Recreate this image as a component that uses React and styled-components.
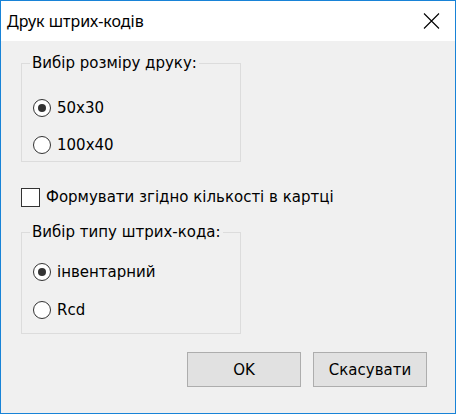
import React from 'react';
import styled, { createGlobalStyle } from 'styled-components';

const GlobalStyle = createGlobalStyle`
  html, body {
    margin: 0;
    padding: 0;
    background: #ffffff;
  }
`;

const Window = styled.div`
  width: 456px;
  height: 414px;
  box-sizing: border-box;
  border: 1px solid #1883d7;
  background: #f0f0f0;
  display: flex;
  flex-direction: column;
  font-family: 'DejaVu Sans', 'Liberation Sans', sans-serif;
  font-size: 15px;
  color: #000;
`;

const TitleBar = styled.div`
  height: 40px;
  flex: none;
  background: #ffffff;
  display: flex;
  align-items: center;
  padding: 0 15px 0 6px;
`;

const Title = styled.div`
  flex: 1;
  font-family: 'Noto Sans', 'Open Sans', sans-serif;
  font-size: 16px;
  color: #000;
`;

const CloseButton = styled.div`
  width: 18px;
  height: 18px;
  display: flex;
  align-items: center;
  justify-content: center;
`;

const Client = styled.div`
  flex: 1;
  padding: 13px 28px 0 20px;
  display: flex;
  flex-direction: column;
`;

const Group = styled.fieldset`
  width: 220px;
  box-sizing: border-box;
  margin: 0;
  padding: ${(p) => p.$pad};
  border: 1px solid #dcdcdc;
  display: flex;
  flex-direction: column;
  gap: ${(p) => p.$gap}px;
`;

const Legend = styled.legend`
  padding: 0 2px;
  line-height: 18px;
`;

const Option = styled.div`
  height: 20px;
  display: flex;
  align-items: center;
  gap: 6px;
  padding-left: 3px;
`;

const Radio = styled.span`
  width: 18px;
  height: 18px;
  box-sizing: border-box;
  border: 1.5px solid #333;
  border-radius: 50%;
  background: #fff;
  display: flex;
  align-items: center;
  justify-content: center;

  &::after {
    content: '';
    width: 8px;
    height: 8px;
    border-radius: 50%;
    background: ${(p) => (p.$checked ? '#333' : 'transparent')};
  }
`;

const CheckRow = styled.div`
  margin-top: 25px;
  height: 20px;
  display: flex;
  align-items: center;
  gap: 6px;
`;

const Checkbox = styled.span`
  width: 19px;
  height: 19px;
  box-sizing: border-box;
  border: 1.5px solid #333;
  background: #fff;
`;

const Spacer = styled.div`
  height: ${(p) => p.$h}px;
  flex: none;
`;

const Buttons = styled.div`
  margin-top: 18px;
  display: flex;
  justify-content: flex-end;
  gap: 12px;
`;

const Button = styled.button`
  width: 114px;
  height: 35px;
  box-sizing: border-box;
  border: 1px solid #adadad;
  background: #e1e1e1;
  font-family: 'DejaVu Sans', 'Liberation Sans', sans-serif;
  font-size: 15px;
  color: #000;
  padding: 0;
`;

const sizes = [
  { id: '50x30', checked: true },
  { id: '100x40', checked: false },
];

const types = [
  { id: 'інвентарний', checked: true },
  { id: 'Rcd', checked: false },
];

export default function App() {
  return (
    <>
      <GlobalStyle />
      <Window>
        <TitleBar>
          <Title>Друк штрих-кодів</Title>
          <CloseButton>
            <svg width="17" height="16" viewBox="0 0 17 16">
              <path d="M1 0.5 L16 15.5 M16 0.5 L1 15.5" stroke="#000" strokeWidth="1.1" />
            </svg>
          </CloseButton>
        </TitleBar>
        <Client>
          <Group $pad="26px 0 6px 8px" $gap={17}>
            <Legend>Вибір розміру друку:</Legend>
            {sizes.map(({ id, checked }) => (
              <Option key={id}>
                <Radio $checked={checked} />
                {id}
              </Option>
            ))}
          </Group>
          <CheckRow>
            <Checkbox />
            Формувати згідно кількості в картці
          </CheckRow>
          <Spacer $h={16} />
          <Group $pad="21px 0 13px 8px" $gap={18}>
            <Legend>Вибір типу штрих-кода:</Legend>
            {types.map(({ id, checked }) => (
              <Option key={id}>
                <Radio $checked={checked} />
                {id}
              </Option>
            ))}
          </Group>
          <Buttons>
            <Button>OK</Button>
            <Button>Скасувати</Button>
          </Buttons>
        </Client>
      </Window>
    </>
  );
}
